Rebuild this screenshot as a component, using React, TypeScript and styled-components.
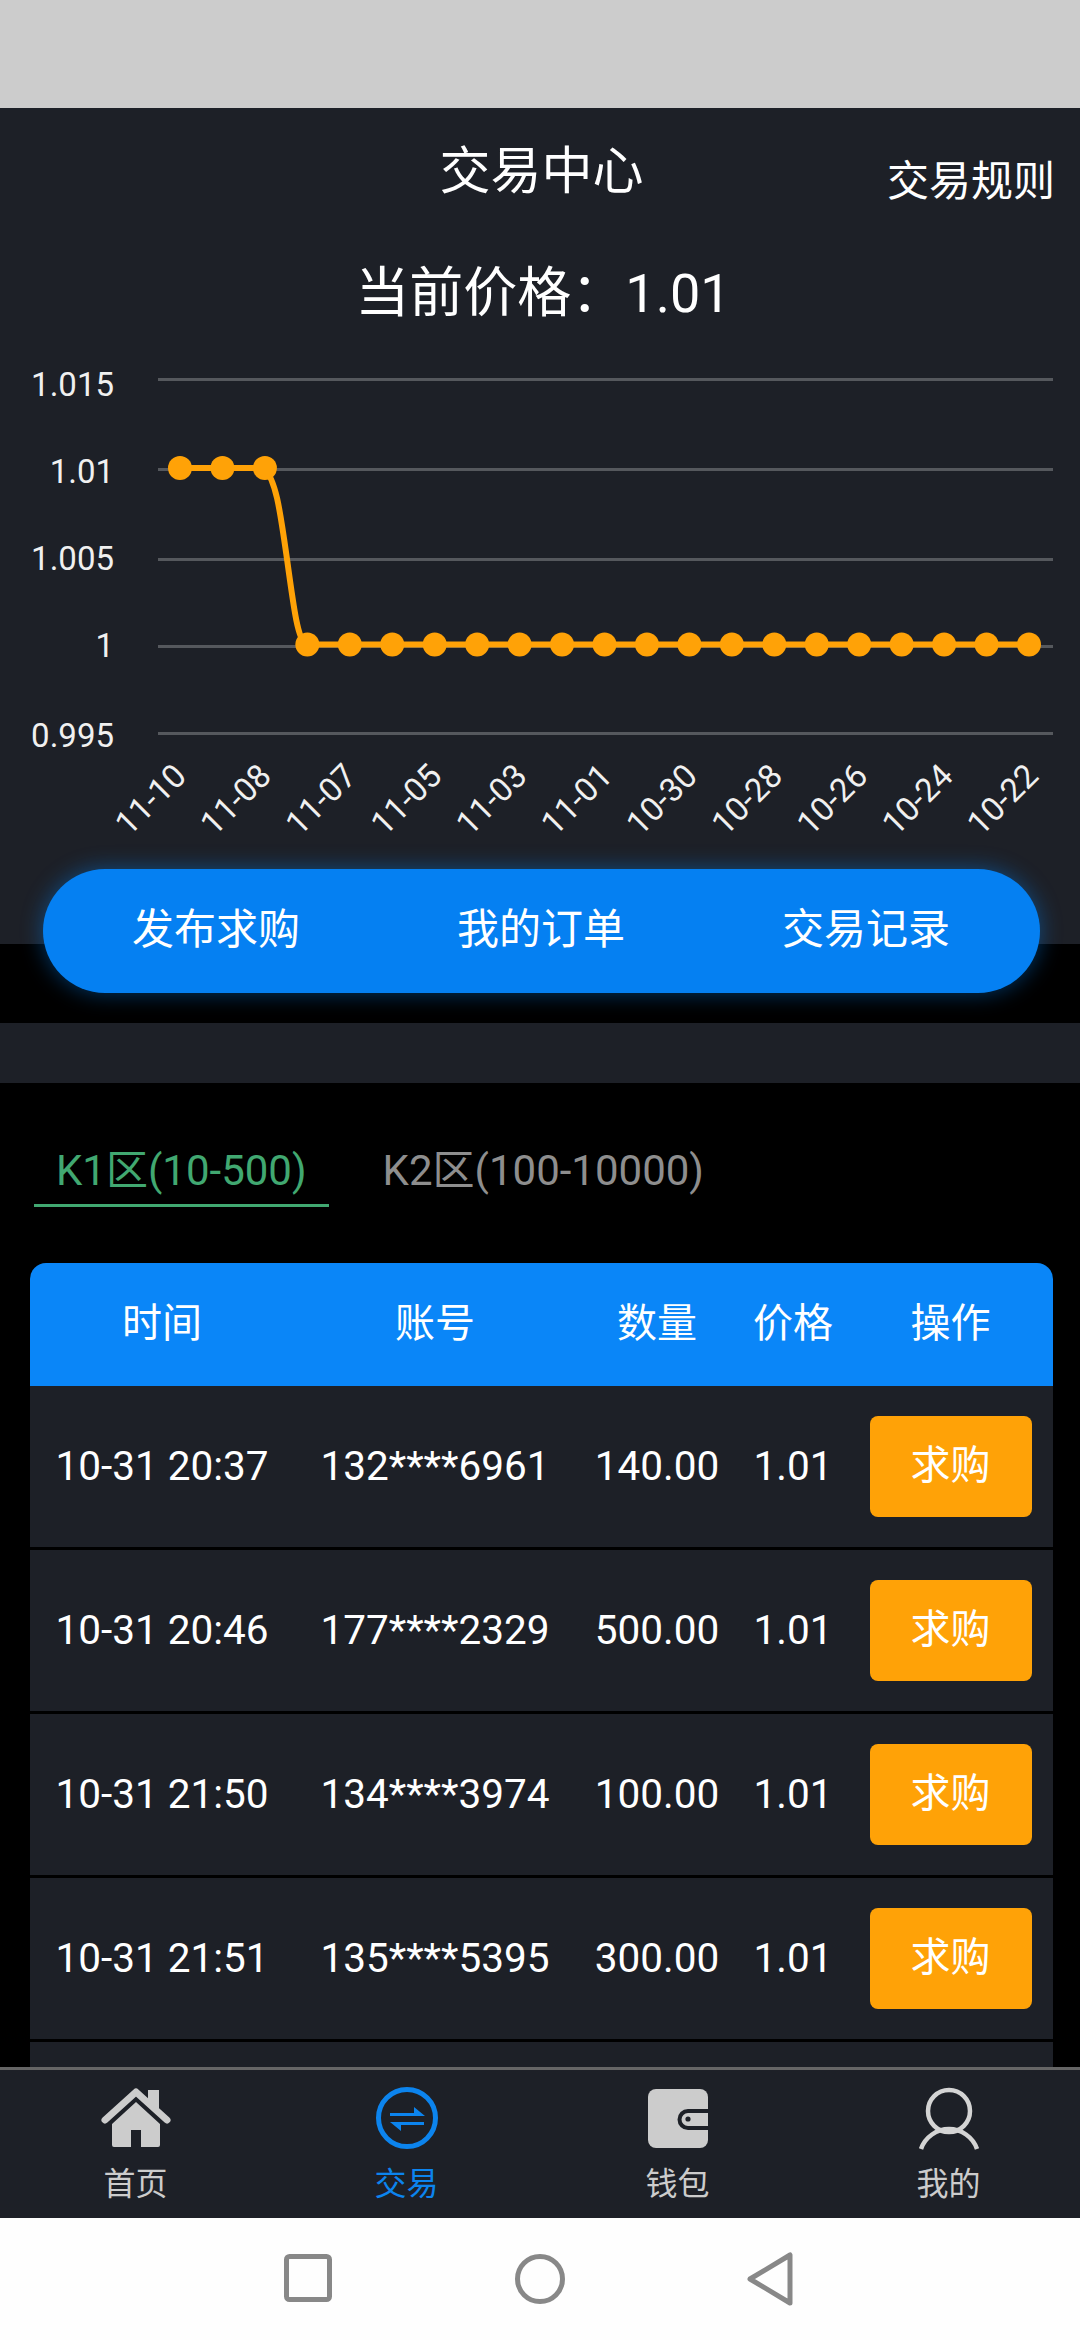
import { createGlobalStyle, styled } from "styled-components";

//====================================================================>

interface Order {
    time: string;
    account: string;
    amount: string;
    price: string;
}

const orders: Order[] = [
    { time: "10-31 20:37", account: "132****6961", amount: "140.00", price: "1.01" },
    { time: "10-31 20:46", account: "177****2329", amount: "500.00", price: "1.01" },
    { time: "10-31 21:50", account: "134****3974", amount: "100.00", price: "1.01" },
    { time: "10-31 21:51", account: "135****5395", amount: "300.00", price: "1.01" },
];

const gridLines = [379.5, 469.5, 559.5, 646.5, 733.5];

const yLabels = [
    { text: "1.015", y: 396 },
    { text: "1.01", y: 483 },
    { text: "1.005", y: 570 },
    { text: "1", y: 657 },
    { text: "0.995", y: 747 },
];

const xLabels = ["11-10", "11-08", "11-07", "11-05", "11-03", "11-01", "10-30", "10-28", "10-26", "10-24", "10-22"];

// 21 daily prices, the first three sit on the 1.01 line
const dots = Array.from({ length: 21 }, (_, i) => ({
    x: 180 + i * 42.45,
    y: i < 3 ? 468 : 644.5,
}));

//====================================================================>

const GlobalStyle = createGlobalStyle`
    html, body {
        margin: 0;
        padding: 0;
        background: #000000;
    }

    * {
        box-sizing: border-box;
    }
`

const Page = styled.div`
    width: 1080px;
    height: 2340px;
    display: flex;
    flex-direction: column;
    overflow: hidden;
    background: #000000;
    color: #ffffff;
    font-family: Roboto, "Noto Sans CJK SC", sans-serif;
`

const StatusBar = styled.div`
    height: 108px;
    flex: none;
    background: #cccccc;
`

const Content = styled.main`
    flex: 1;
    min-height: 0;
    overflow: hidden;
`

const Hero = styled.section`
    padding-bottom: 30px;
    background: linear-gradient(#1d2027 836px, #000000 836px);
`

const TitleBar = styled.header`
    height: 126px;
    padding: 0 25px 0 28px;
    display: grid;
    grid-template-columns: 1fr auto 1fr;
    align-items: center;
`

const Title = styled.h1`
    grid-column: 2;
    margin: 0 0 8px;
    font-size: 51px;
    font-weight: 400;
`

const RulesLink = styled.a`
    justify-self: end;
    margin-top: 12px;
    font-size: 42px;
`

const CurrentPrice = styled.div`
    height: 114px;
    padding: 0 0 6px 6px;
    display: flex;
    align-items: center;
    justify-content: center;
    font-size: 54px;
`

const Chart = styled.svg`
    display: block;
    width: 1080px;
    height: 500px;

    text {
        fill: #f0f0f0;
        font-size: 33px;
        font-family: Roboto, sans-serif;
    }
`

const ActionPill = styled.nav`
    width: 997px;
    height: 124px;
    margin: 21px 0 0 43px;
    padding: 0 90px 12px 89px;
    display: flex;
    align-items: center;
    justify-content: space-between;
    border-radius: 62px;
    background: #0580f2;
    box-shadow: 0 0 22px rgba(5, 128, 242, 0.45);
    font-size: 42px;
`

const Band = styled.div`
    height: 60px;
    background: #1d2027;
`

const Tabs = styled.div`
    padding: 52px 0 56px 34px;
    display: flex;
    gap: 32px;
`

const Tab = styled.div<{ $active?: boolean }>`
    height: 72px;
    padding: 0 22px 6px;
    display: flex;
    align-items: center;
    font-size: 42px;
    color: ${(p) => (p.$active ? "#41a871" : "#8e8e8e")};
    border-bottom: 3px solid ${(p) => (p.$active ? "#41a871" : "transparent")};
`

const Table = styled.div`
    width: 1023px;
    margin-left: 30px;
`

const columns = "264px 282px 162px 110px 1fr";

const HeadRow = styled.div`
    height: 123px;
    padding-bottom: 10px;
    display: grid;
    grid-template-columns: ${columns};
    align-items: center;
    justify-items: center;
    border-radius: 16px 16px 0 0;
    background: #0a86f8;
    font-size: 40px;
`

const Row = styled.div`
    height: 161px;
    margin-bottom: 3px;
    display: grid;
    grid-template-columns: ${columns};
    align-items: center;
    justify-items: center;
    background: #1d2027;
    font-size: 40.5px;
`

const Cell = styled.span`
    margin-bottom: 2px;
`

const BuyButton = styled.button`
    width: 162px;
    height: 101px;
    padding: 0 0 10px;
    border: 0 none;
    border-radius: 8px;
    background: #ffa207;
    color: #ffffff;
    font-family: inherit;
    font-size: 40px;
`

const TabBar = styled.footer`
    height: 151px;
    flex: none;
    display: grid;
    grid-template-columns: repeat(4, 271px);
    border-top: 3px solid #666666;
    background: #1d2027;
`

const TabItem = styled.div<{ $active?: boolean }>`
    padding-top: 8px;
    display: flex;
    flex-direction: column;
    align-items: center;
    font-size: 32px;
    line-height: 40px;
    color: ${(p) => (p.$active ? "#0c84ee" : "#cccccc")};

    svg {
        display: block;
        width: 80px;
        height: 80px;
        margin-bottom: 6px;
    }
`

const SystemBar = styled.div`
    height: 122px;
    flex: none;
    display: flex;
    align-items: center;
    justify-content: center;
    gap: 175px;
    background: #fefefe;

    svg {
        display: block;
        width: 56px;
        height: 56px;
        fill: none;
        stroke: #888888;
        stroke-width: 5;
        stroke-linejoin: round;
    }
`

//====================================================================>

function HomeIcon() {
    return (
        <svg viewBox="0 0 80 80">
            <path d="M40 24 L64 46 V67 Q64 69 62 69 H45 V52 H35 V69 H18 Q16 69 16 67 V46 Z" fill="currentColor" />
            <path d="M9 42 L40 14 L71 42" fill="none" stroke="currentColor" strokeWidth="7" strokeLinecap="round" strokeLinejoin="round" />
            <path d="M52 12 H63 V34 L52 24 Z" fill="currentColor" />
        </svg>
    )
}

function ExchangeIcon() {
    return (
        <svg viewBox="0 0 80 80">
            <circle cx="40" cy="40" r="28.5" fill="none" stroke="currentColor" strokeWidth="5" />
            <path d="M23 35 H47 V29 L58 38 H23 Z" fill="currentColor" />
            <path d="M57 44 H23 L34 53 V47 H57 Z" fill="currentColor" />
        </svg>
    )
}

function WalletIcon() {
    return (
        <svg viewBox="0 0 80 80">
            <rect x="10" y="11" width="60" height="59" rx="8" fill="currentColor" />
            <path d="M70 33 H50 A8.5 8.5 0 0 0 50 50 H70" fill="none" stroke="#1d2027" strokeWidth="4" />
            <circle cx="50" cy="41" r="2.6" fill="#1d2027" />
        </svg>
    )
}

function UserIcon() {
    return (
        <svg viewBox="0 0 80 80">
            <circle cx="40" cy="33" r="21" fill="none" stroke="#d4d4d4" strokeWidth="4.5" />
            <path d="M12 71 C16 59 28 51 40 51 C52 51 64 59 68 71" fill="none" stroke="#d4d4d4" strokeWidth="4.5" />
        </svg>
    )
}

//====================================================================>

function App() {
    return (
        <Page>
            <GlobalStyle />
            <StatusBar />
            <Content>
                <Hero>
                    <TitleBar>
                        <Title>交易中心</Title>
                        <RulesLink>交易规则</RulesLink>
                    </TitleBar>
                    <CurrentPrice>当前价格：1.01</CurrentPrice>
                    <Chart viewBox="0 348 1080 500">
                        {gridLines.map((y) => (
                            <line key={y} x1="158" x2="1053" y1={y} y2={y} stroke="#55585d" strokeWidth="3" />
                        ))}
                        {yLabels.map((l) => (
                            <text key={l.text} x="114" y={l.y} textAnchor="end">{l.text}</text>
                        ))}
                        {xLabels.map((l, i) => (
                            <text
                                key={l}
                                textAnchor="end"
                                transform={`translate(${188 + i * 85.2} 778) rotate(-45)`}
                            >
                                {l}
                            </text>
                        ))}
                        <path
                            d="M180 468 H264 C276 480 280 510 287 559 C294 610 298 640 306 644.5 H1029"
                            fill="none"
                            stroke="#ffa207"
                            strokeWidth="6"
                        />
                        {dots.map((d) => (
                            <circle key={d.x} cx={d.x} cy={d.y} r="12" fill="#ffa207" />
                        ))}
                    </Chart>
                    <ActionPill>
                        <span>发布求购</span>
                        <span>我的订单</span>
                        <span>交易记录</span>
                    </ActionPill>
                </Hero>
                <Band />
                <Tabs>
                    <Tab $active>K1区(10-500)</Tab>
                    <Tab>K2区(100-10000)</Tab>
                </Tabs>
                <Table>
                    <HeadRow>
                        <span>时间</span>
                        <span>账号</span>
                        <span>数量</span>
                        <span>价格</span>
                        <span>操作</span>
                    </HeadRow>
                    {orders.map((o) => (
                        <Row key={o.account}>
                            <Cell>{o.time}</Cell>
                            <Cell>{o.account}</Cell>
                            <Cell>{o.amount}</Cell>
                            <Cell>{o.price}</Cell>
                            <BuyButton>求购</BuyButton>
                        </Row>
                    ))}
                    <Row />
                </Table>
            </Content>
            <TabBar>
                <TabItem><HomeIcon />首页</TabItem>
                <TabItem $active><ExchangeIcon />交易</TabItem>
                <TabItem><WalletIcon />钱包</TabItem>
                <TabItem><UserIcon />我的</TabItem>
            </TabBar>
            <SystemBar>
                <svg viewBox="0 0 56 56"><rect x="5.5" y="5.5" width="43" height="43" rx="3" /></svg>
                <svg viewBox="0 0 56 56"><circle cx="28" cy="28" r="22.5" /></svg>
                <svg viewBox="0 0 56 56"><path d="M7 28 L47 4 V52 Z" /></svg>
            </SystemBar>
        </Page>
    )
}
export default App
